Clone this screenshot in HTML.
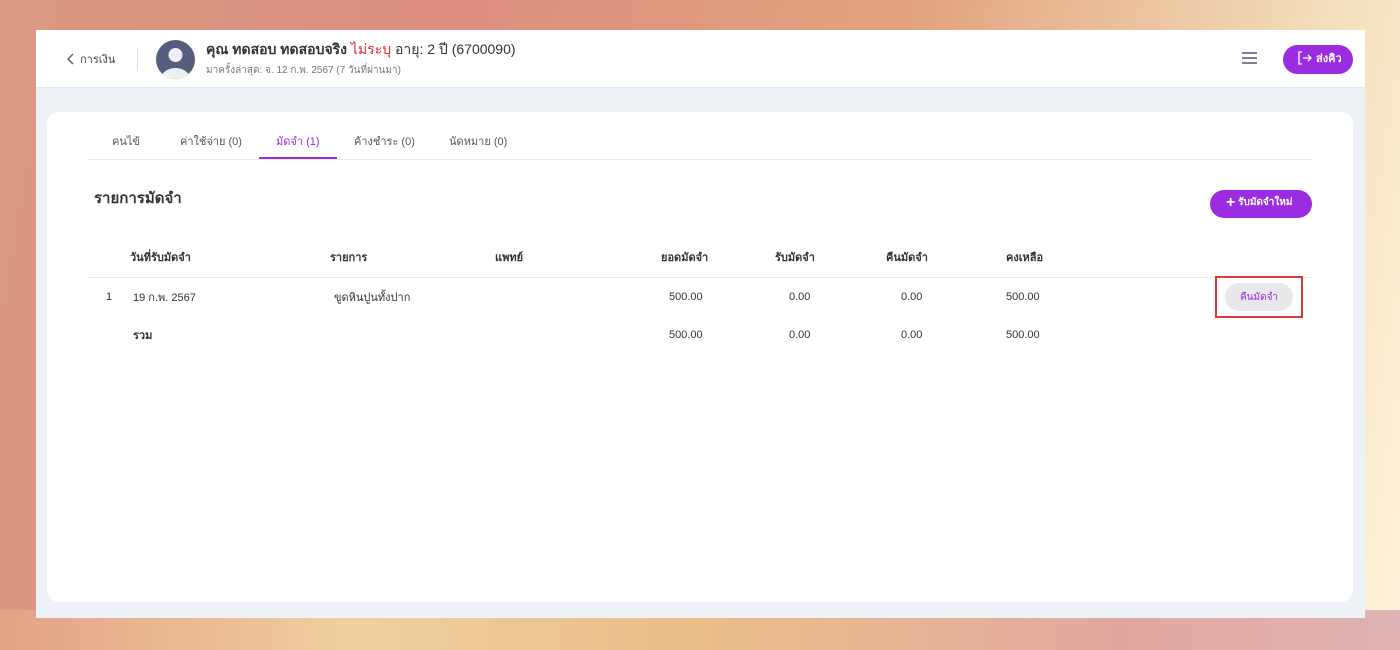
<!DOCTYPE html>
<html><head><meta charset="utf-8"><style>
*{margin:0;padding:0;box-sizing:border-box}
body{width:1400px;height:650px;overflow:hidden;font-family:"Liberation Sans","Noto Sans CJK SC",sans-serif;
background:linear-gradient(100deg,#d99a82 0%,#dd8f80 30%,#e2a27f 60%,#f5e3c0 90%,#fff4dc 100%);position:relative}
.bgb{position:absolute;left:0;right:0;bottom:0;height:40px;background:linear-gradient(90deg,#e3a288,#f0cfa0 25%,#e9bf8a 50%,#e2a8a0 80%,#deb2b4)}
.app{position:absolute;left:36px;top:30px;width:1329px;height:588px;background:#eef2f7}
.hdr{position:absolute;left:0;top:0;width:100%;height:58px;background:#fff;border-bottom:1px solid #e3e6ea}
.t{position:absolute;white-space:nowrap}
.card{position:absolute;left:11px;top:82px;width:1306px;height:490px;background:#fff;border-radius:12px}
.th{font-size:11px;font-weight:bold;color:#333;top:136px}
.td{font-size:11px;color:#333}
</style></head><body>
<div class="bgb"></div>
<div class="app">
 <div class="hdr">
  <svg class="t" style="left:30px;top:23px" width="10" height="12"><path d="M7 1L2 6l5 5" stroke="#555" stroke-width="1.3" fill="none"/></svg>
  <div class="t" style="left:44px;top:20px;font-size:11px;color:#444">การเงิน</div>
  <div class="t" style="left:101px;top:17px;width:1px;height:24px;background:#ddd"></div>
  <svg class="t" style="left:120px;top:10px" width="39" height="39"><defs><clipPath id="c"><circle cx="19.5" cy="19.5" r="19.5"/></clipPath></defs><g clip-path="url(#c)"><rect width="39" height="39" fill="#555e7c"/><circle cx="19.5" cy="15" r="7" fill="#eceff3"/><ellipse cx="19.5" cy="40" rx="15" ry="12" fill="#eceff3"/></g></svg>
  <div class="t" style="left:170px;top:9px;font-size:14px;color:#333"><b>คุณ ทดสอบ ทดสอบจริง</b> <span style="color:#d32f2f">ไม่ระบุ</span> อายุ: 2 ปี (6700090)</div>
  <div class="t" style="left:170px;top:33px;font-size:10px;color:#777">มาครั้งล่าสุด: จ. 12 ก.พ. 2567 (7 วันที่ผ่านมา)</div>
  <div class="t" style="left:1206px;top:22px;width:15px;height:2px;background:#7a8290;box-shadow:0 5px 0 #7a8290,0 10px 0 #7a8290"></div>
  <div class="t" style="left:1247px;top:15px;width:70px;height:29px;border-radius:15px;background:#9b2ce0;color:#fff;font-size:11px;font-weight:bold;line-height:29px;padding-left:14px">
   <svg style="vertical-align:-3px" width="16" height="14"><path d="M5 1H2v12h3M6 7h8M11 4l3 3-3 3" stroke="#fff" stroke-width="1.3" fill="none"/></svg> ส่งคิว</div>
 </div>
 <div class="card">
  <div class="t" style="left:41px;top:47px;width:1224px;height:1px;background:#e8ecf1"></div>
  <div class="t" style="left:65px;top:20px;font-size:11px;color:#555">คนไข้</div>
  <div class="t" style="left:133px;top:20px;font-size:11px;color:#555">ค่าใช้จ่าย (0)</div>
  <div class="t" style="left:229px;top:20px;font-size:11px;color:#9b2ce0">มัดจำ (1)</div>
  <div class="t" style="left:212px;top:45px;width:78px;height:2px;background:#9b2ce0"></div>
  <div class="t" style="left:307px;top:20px;font-size:11px;color:#555">ค้างชำระ (0)</div>
  <div class="t" style="left:402px;top:20px;font-size:11px;color:#555">นัดหมาย (0)</div>
  <div class="t" style="left:47px;top:74px;font-size:15px;font-weight:bold;color:#333">รายการมัดจำ</div>
  <div class="t" style="left:1163px;top:78px;width:102px;height:28px;border-radius:14px;background:#9b2ce0;color:#fff;font-size:10px;font-weight:bold;line-height:26px;padding-left:16px"><span style="font-size:16px;vertical-align:-2px">+</span> รับมัดจำใหม่</div>
  <div class="t th" style="left:83px">วันที่รับมัดจำ</div>
  <div class="t th" style="left:283px">รายการ</div>
  <div class="t th" style="left:448px">แพทย์</div>
  <div class="t th" style="left:614px">ยอดมัดจำ</div>
  <div class="t th" style="left:728px">รับมัดจำ</div>
  <div class="t th" style="left:839px">คืนมัดจำ</div>
  <div class="t th" style="left:959px">คงเหลือ</div>
  <div class="t" style="left:41px;top:165px;width:1224px;height:1px;background:#e8ecf1"></div>
  <div class="t td" style="left:59px;top:179px">1</div>
  <div class="t td" style="left:86px;top:176px">19 ก.พ. 2567</div>
  <div class="t td" style="left:287px;top:176px">ขูดหินปูนทั้งปาก</div>
  <div class="t td" style="left:622px;top:179px">500.00</div>
  <div class="t td" style="left:742px;top:179px">0.00</div>
  <div class="t td" style="left:854px;top:179px">0.00</div>
  <div class="t td" style="left:959px;top:179px">500.00</div>
  <div class="t" style="left:1168px;top:164px;width:88px;height:42px;border:2px solid #d93a36"></div>
  <div class="t" style="left:1178px;top:171px;width:68px;height:28px;border-radius:14px;background:#e8e8ea;color:#9b2ce0;font-size:10px;line-height:30px;text-align:center">คืนมัดจำ</div>
  <div class="t td" style="left:86px;top:214px;font-weight:bold">รวม</div>
  <div class="t td" style="left:622px;top:217px">500.00</div>
  <div class="t td" style="left:742px;top:217px">0.00</div>
  <div class="t td" style="left:854px;top:217px">0.00</div>
  <div class="t td" style="left:959px;top:217px">500.00</div>
 </div>
</div>
</body></html>
